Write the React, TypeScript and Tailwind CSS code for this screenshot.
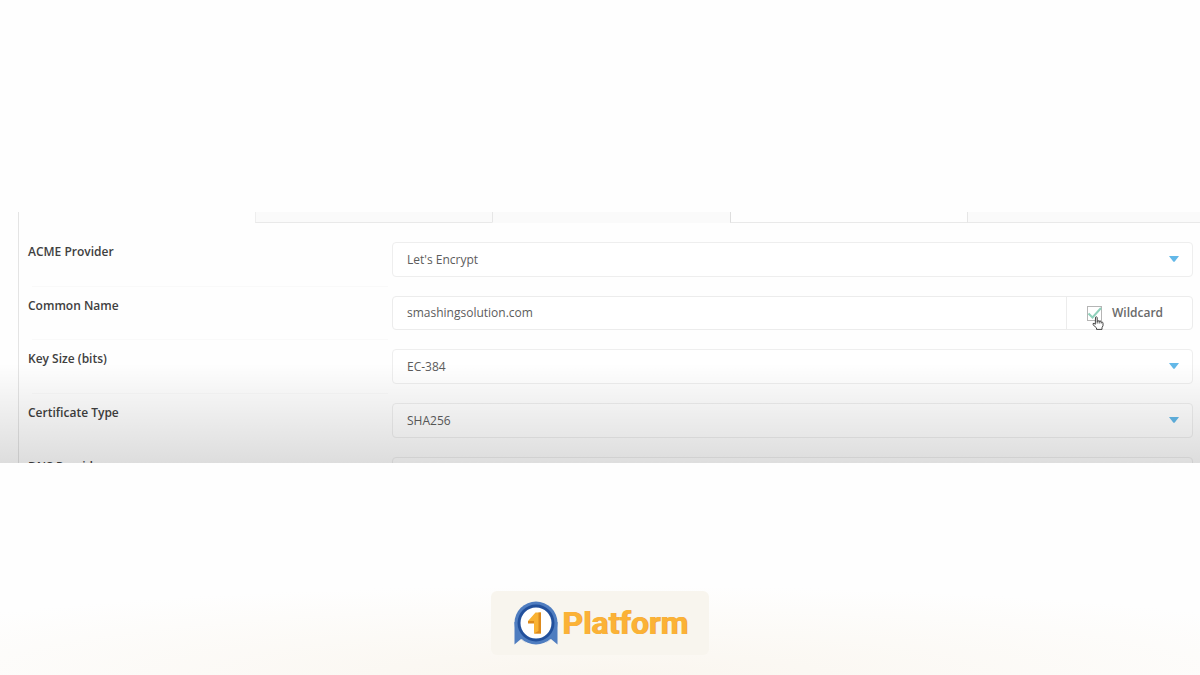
import type { ReactNode } from "react";

const tabs = [
  { id: 1, style: "border-b-transparent" },
  { id: 2, style: "border-l border-l-[#eeeeee] border-b-[#e9e9e9] bg-[#fafafa]" },
  { id: 3, style: "border-l border-l-[#e6e6e6] border-b-[#fafafa] bg-[#fafafa]" },
  { id: 4, style: "border-l border-l-[#dedede] border-b-[#e9e9e9] bg-[#fefefe]" },
  { id: 5, style: "border-l border-l-[#e6e6e6] border-b-[#e9e9e9] bg-[#fafafa]" },
];

function Row({ id, label, children }: { id: string; label: string; children: ReactNode }) {
  return (
    <div className="group flex pb-[19px]">
      <div className="relative w-[364px] shrink-0">
        <label htmlFor={id} className="block text-xs leading-5 font-semibold text-[#404040]">
          {label}
        </label>
        {/* Divider between rows */}
        <div className="absolute inset-x-1 -bottom-2.5 h-px bg-[#f9f9f9] group-nth-4:hidden group-last:hidden" />
      </div>
      {children}
    </div>
  );
}

function SelectField({ id, value }: { id: string; value: string }) {
  return (
    <div className="relative flex-1">
      <select
        id={id}
        defaultValue={value}
        className="block h-[35px] w-full appearance-none rounded border border-[#eeeeee] bg-white px-[14px] text-xs text-[#5c5c5c] outline-none">
        <option>{value}</option>
      </select>
      <svg
        viewBox="0 0 10 6"
        className="pointer-events-none absolute top-[14px] right-[14px] h-1.5 w-2.5 fill-[#63b8e8]">
        <path d="M0 0h10L5.800 5.500Q5 6.200 4.200 5.500Z" />
      </svg>
    </div>
  );
}

function HandCursor() {
  return (
    <svg
      viewBox="0 0 12 14"
      className="pointer-events-none absolute top-[10px] left-[5px] h-[14px] w-3">
      <path
        d="M3.500 1.200q1-.8 1.700.2v4l1-.5 1 .6 1-.2.800.7 1-.1q1 .3 1 1.300v2.500l-1 2v1.700h-5.500v-1.500L1 8.700q-.5-1.500 1-1.400l1.300 1z"
        fill="#fff"
        stroke="#444"
        strokeWidth="1"
        strokeLinejoin="round"
      />
      <path d="M5.200 5v2.500M7.200 5.500v2M9.200 6v1.500" stroke="#444" strokeWidth=".9" />
    </svg>
  );
}

function Medal() {
  return (
    <svg viewBox="0 0 44 44" className="h-11 w-11">
      <path d="M.5 21v22.500l6.500-5.500 5 4h20l5-4 6.500 5.500V21z" fill="#4f7dc0" />
      <path d="M7 38l7 6h16l7-6z" fill="#f8f5ee" />
      <circle cx="22" cy="22" r="21.500" fill="#4f7dc0" />
      <circle cx="22" cy="22" r="18.500" fill="#22509c" />
      <circle cx="22" cy="22" r="15.500" fill="#fff" />
      <path d="M14 20L21.500 11.500H27v21h-7V21z" fill="#f9b233" />
      <path d="M24.500 11.500H27v21h-7l4.500-2.500zM14 20h6v2.500h-6z" fill="#dd8a1d" />
    </svg>
  );
}

export default function App() {
  return (
    <main className="flex min-h-screen flex-col bg-[#fefefe] bg-[radial-gradient(ellipse_70%_90px_at_50%_100%,#faf6ef,#fefefe)] pt-[212px] font-['Open_Sans',sans-serif]">
      <section className="relative h-[251px] overflow-hidden">
        <div className="ml-[18px] border-l border-[#e4e4e4]">
          <div className="-mr-1 flex" aria-hidden="true">
            {tabs.map((tab) => (
              <div key={tab.id} className={`h-[11px] flex-1 border-b ${tab.style}`} />
            ))}
          </div>

          <form className="pt-[19px] pr-[7px] pl-[9px]">
            <Row id="provider" label="ACME Provider">
              <SelectField id="provider" value="Let's Encrypt" />
            </Row>
            <Row id="common-name" label="Common Name">
              <div className="flex h-[34px] flex-1 rounded border border-[#ececec] bg-white">
                <input
                  id="common-name"
                  type="text"
                  defaultValue="smashingsolution.com"
                  className="min-w-0 flex-1 bg-transparent px-[14px] text-xs text-[#5c5c5c] outline-none"
                />
                <label className="flex w-[126px] items-center gap-2.5 border-l border-[#ececec] pl-5 text-xs font-semibold text-[#6a6a6a]">
                  <span className="relative block size-[15px]">
                    <input
                      type="checkbox"
                      defaultChecked
                      className="block size-[15px] appearance-none border border-[#b5b5b5] bg-white"
                    />
                    <svg viewBox="0 0 15 15" className="pointer-events-none absolute inset-0">
                      <path d="M1.500 7.500l4 4L14 2" fill="none" stroke="#8fd0bb" strokeWidth="2" />
                    </svg>
                    <HandCursor />
                  </span>
                  Wildcard
                </label>
              </div>
            </Row>
            <Row id="key-size" label="Key Size (bits)">
              <SelectField id="key-size" value="EC-384" />
            </Row>
            <Row id="cert-type" label="Certificate Type">
              <SelectField id="cert-type" value="SHA256" />
            </Row>
            <Row id="dns" label="DNS Provider">
              <SelectField id="dns" value="" />
            </Row>
          </form>
        </div>

        {/* Shade over the lower part of the form */}
        <div className="pointer-events-none absolute inset-x-0 bottom-0 h-[100px] bg-linear-to-b from-transparent to-black/13" />
      </section>

      <footer className="mt-auto flex justify-center pb-5">
        <div className="flex h-16 w-[218px] items-center justify-center gap-1 rounded-md bg-[#f8f5ee] pl-0.5">
          <Medal />
          <span className="font-['Roboto',sans-serif] text-[32px] leading-10 font-bold text-[#fbb236] [text-shadow:1px_0_0_#eba43a]">
            Platform
          </span>
        </div>
      </footer>
    </main>
  );
}
